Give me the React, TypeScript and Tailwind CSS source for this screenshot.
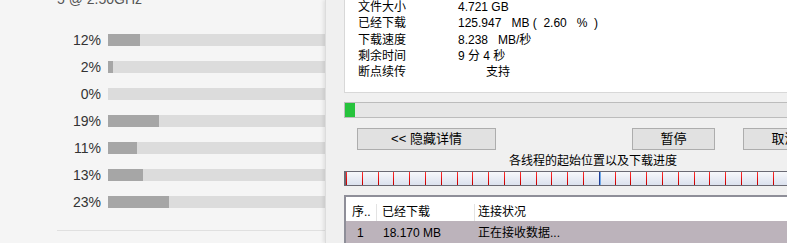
import React from 'react';

const cpuRows = [12, 2, 0, 19, 11, 13, 23];

const infoRows: [string, string, string?][] = [
  ['文件大小', '4.721 GB'],
  ['已经下载', '125.947   MB (  2.60   %  )'],
  ['下载速度', '8.238   MB/秒'],
  ['剩余时间', '9 分 4 秒'],
  ['断点续传', '支持', 'pl-[28px]'],
];

// 线程起始位置刻度
const ticks = Array.from({ length: 32 }, (_, i) => Math.round(i * 15.8));

const App: React.FC = () => {
  return (
    <div className="relative w-[787px] h-[243px] overflow-hidden bg-[#f5f5f5] font-['Liberation_Sans','Noto_Sans_CJK_SC',sans-serif]">
      {/* 左侧 CPU 使用率 */}
      <div className="pl-[57px]">
        <div className="-mt-[11px] h-[20px] leading-[20px] text-[14px] text-[#555]">5 @ 2.50GHz</div>
        <div className="mt-[25px] flex flex-col gap-[15px]">
          {cpuRows.map((v, i) => (
            <div key={i} className="flex items-center h-[12px]">
              <div className="w-[44px] text-right text-[14px] leading-none text-[#333]">{v}%</div>
              <div className="ml-[7px] w-[266px] h-[12px] bg-[#dcdcdc]">
                <div className="h-full bg-[#a6a6a6]" style={{ width: `${v}%` }} />
              </div>
            </div>
          ))}
        </div>
        <div className="mt-[22px] h-px w-[300px] bg-[#e0e0e0]" />
      </div>

      {/* 下载对话框 */}
      <div className="absolute top-0 left-[325px] w-[540px] h-full bg-[#f0f0f0] border-l border-[#dcdcdc] shadow-[-2px_0_3px_rgba(0,0,0,0.08)] pl-[18px] flex flex-col text-[12px] text-black">
        <div className="-mt-[10px] w-[498px] h-[104px] bg-white border border-[#d8d8d8] pt-[8px] pl-[13px]">
          {infoRows.map(([k, v, extra]) => (
            <div key={k} className="flex leading-[16.25px] h-[16.25px]">
              <div className="w-[100px]">{k}</div>
              <div className={`whitespace-pre ${extra ?? ''}`}>{v}</div>
            </div>
          ))}
        </div>

        <div className="mt-[9px] w-[498px] h-[16px] border border-[#bcbcbc] bg-[#e6e6e6]">
          <div className="w-[10px] h-full bg-[#26c33c]" />
        </div>

        <div className="mt-[10px] flex h-[22px] text-[13px]">
          <button className="ml-[13px] w-[139px] h-full bg-[#e1e1e1] border border-[#adadad] flex items-center justify-center">
            &lt;&lt; 隐藏详情
          </button>
          <button className="ml-[136px] w-[83px] h-full bg-[#e1e1e1] border border-[#adadad] flex items-center justify-center">
            暂停
          </button>
          <button className="ml-[28px] w-[83px] h-full bg-[#e1e1e1] border border-[#adadad] flex items-center justify-center">
            取消
          </button>
        </div>

        <div className="mt-[3px] w-[498px] h-[17px] leading-[17px] text-center">各线程的起始位置以及下载进度</div>

        <div className="relative mt-px w-[498px] h-[15px] border border-l-2 border-[#6a6a74] bg-gradient-to-b from-[#f7f8fb] to-[#dbe1ee] overflow-hidden">
          {ticks.map((x, i) =>
            i === 16 ? (
              <div key={i} className="absolute top-0 bottom-0 flex" style={{ left: x }}>
                <div className="w-px h-full bg-[#1d3f9a]" />
                <div className="w-px h-full bg-[#6fa8e8]" />
              </div>
            ) : (
              <div
                key={i}
                className="absolute top-0 bottom-0 w-px bg-gradient-to-b from-[#ff3030] via-[#e81010] to-[#c00000]"
                style={{ left: x }}
              />
            )
          )}
        </div>

        <div className="mt-[9px] w-[498px] flex-1 border-t-2 border-l-2 border-[#8e8e98] bg-white">
          <div className="flex h-[24px] pt-[7px] leading-[16px]">
            <div className="w-[31px] pl-[6px] border-r border-[#e3e3e3]">序..</div>
            <div className="w-[98px] pl-[5px] border-r border-[#e3e3e3]">已经下载</div>
            <div className="pl-[3px]">连接状况</div>
          </div>
          <div className="flex h-[22px] items-center pt-[2px] bg-[#bcb3bb]">
            <div className="w-[31px] pl-[11px]">1</div>
            <div className="w-[98px] pl-[6px]">18.170 MB</div>
            <div className="pl-[3px]">正在接收数据...</div>
          </div>
        </div>
      </div>
    </div>
  );
};

export default App;
